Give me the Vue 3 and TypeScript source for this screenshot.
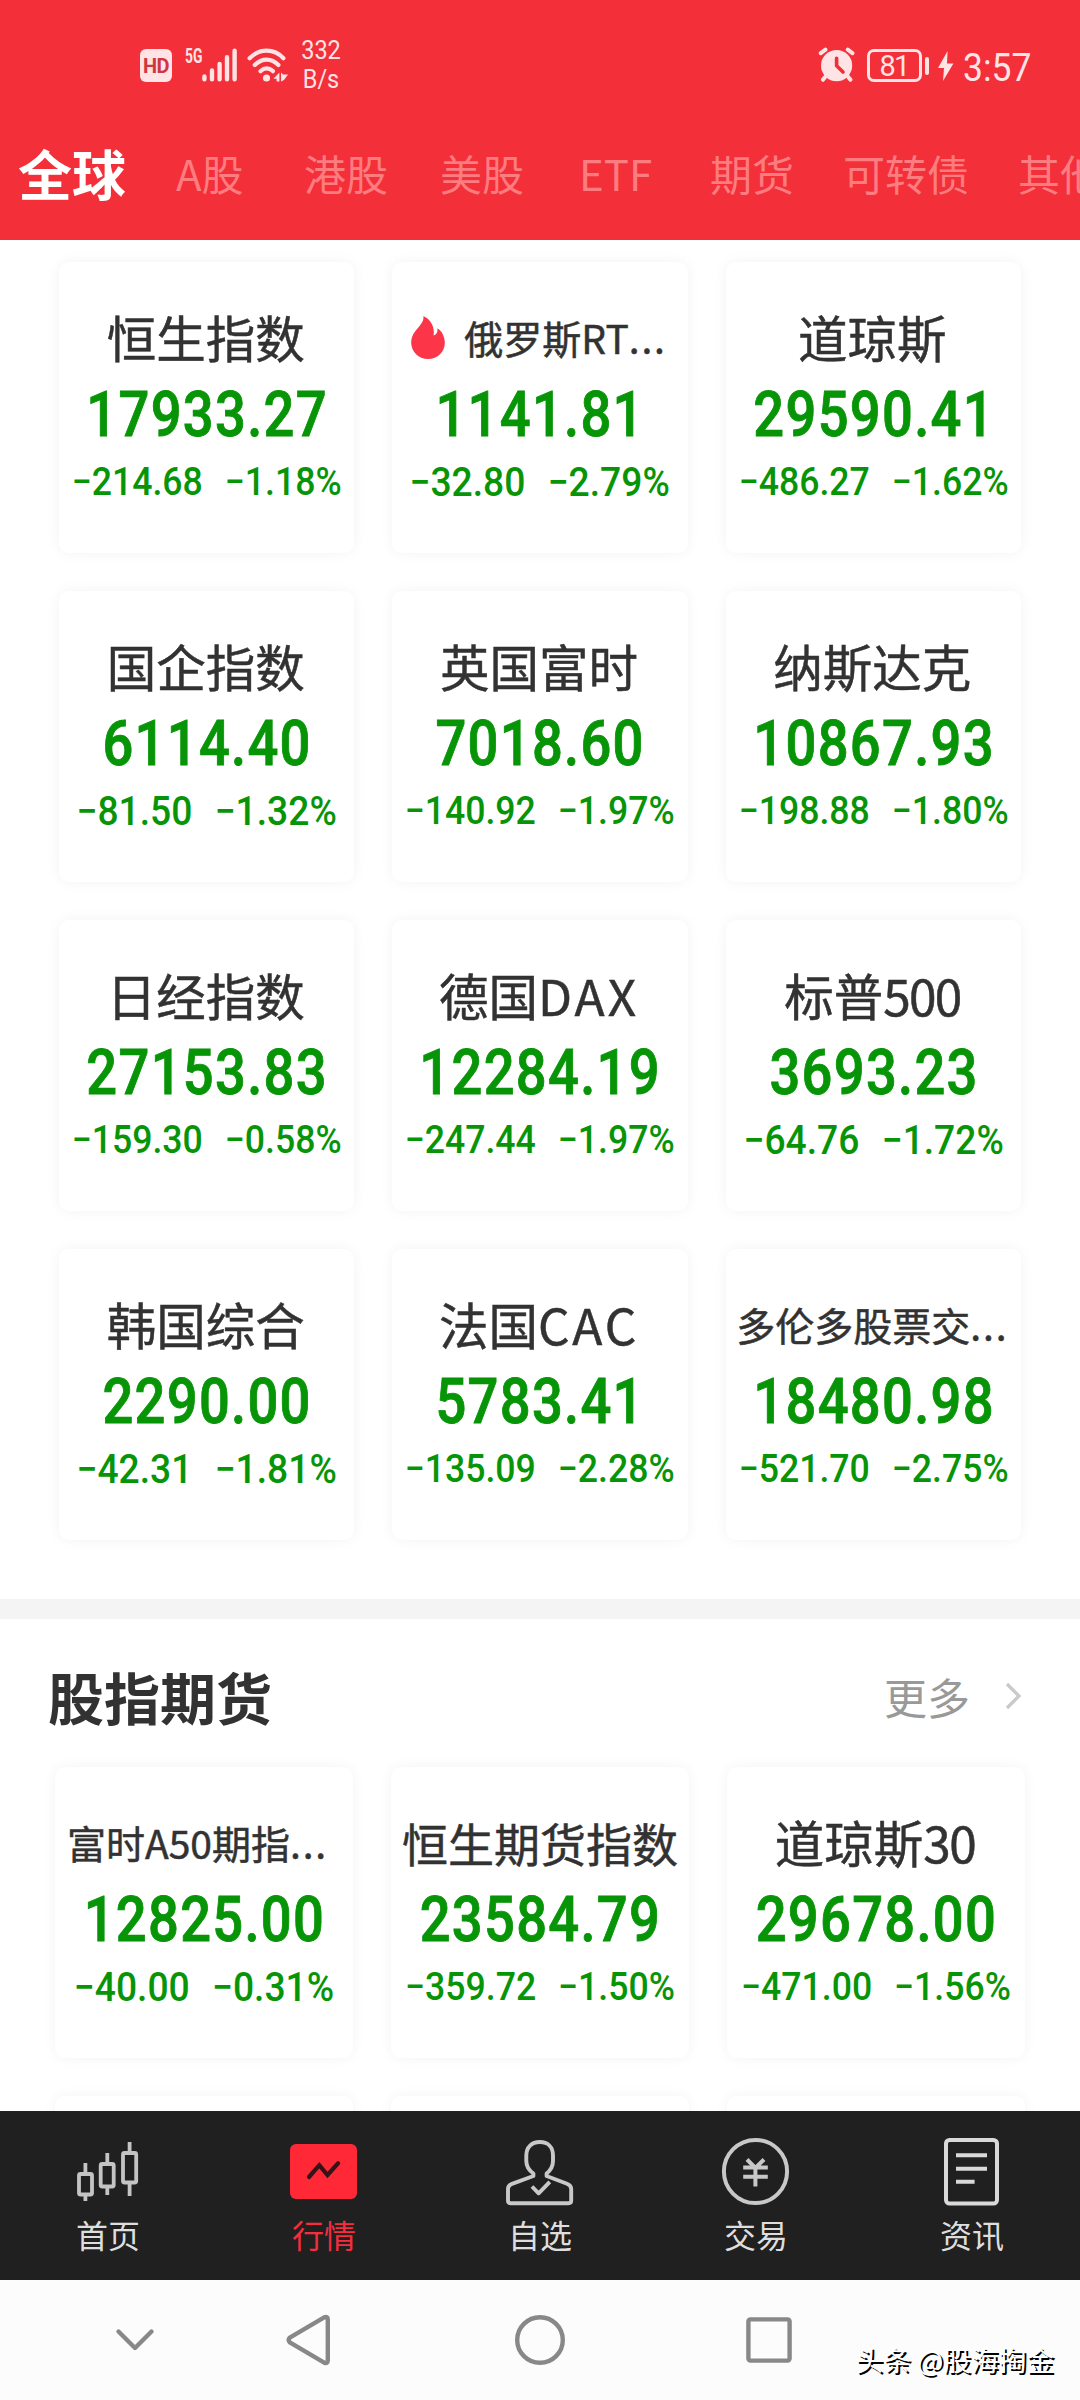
<script setup lang="ts">
interface Quote {
  name: string
  price: string
  change: string
  percent: string
  tail?: string
  tracking?: number
  size?: 'mid' | 'small'
  cut?: boolean
  hot?: boolean
}

interface Tab {
  label: string
  width: number
}

const tabs: Tab[] = [
  { label: 'A股', width: 128 },
  { label: '港股', width: 136 },
  { label: '美股', width: 139 },
  { label: 'ETF', width: 131 },
  { label: '期货', width: 133 },
  { label: '可转债', width: 175 },
  { label: '其他', width: 100 },
]

const indices: Quote[] = [
  { name: '恒生指数', price: '17933.27', change: '−214.68', percent: '−1.18%' },
  { name: '俄罗斯RT', price: '1141.81', change: '−32.80', percent: '−2.79%', size: 'small', cut: true, hot: true },
  { name: '道琼斯', price: '29590.41', change: '−486.27', percent: '−1.62%' },
  { name: '国企指数', price: '6114.40', change: '−81.50', percent: '−1.32%' },
  { name: '英国富时', price: '7018.60', change: '−140.92', percent: '−1.97%' },
  { name: '纳斯达克', price: '10867.93', change: '−198.88', percent: '−1.80%' },
  { name: '日经指数', price: '27153.83', change: '−159.30', percent: '−0.58%' },
  { name: '德国', tail: 'DAX', tracking: 3, price: '12284.19', change: '−247.44', percent: '−1.97%' },
  { name: '标普', tail: '500', tracking: -1.8, price: '3693.23', change: '−64.76', percent: '−1.72%' },
  { name: '韩国综合', price: '2290.00', change: '−42.31', percent: '−1.81%' },
  { name: '法国', tail: 'CAC', tracking: 2.8, price: '5783.41', change: '−135.09', percent: '−2.28%' },
  { name: '多伦多股票交', price: '18480.98', change: '−521.70', percent: '−2.75%', size: 'small', cut: true },
]

const futures: Quote[] = [
  { name: '富时A50期指', price: '12825.00', change: '−40.00', percent: '−0.31%', size: 'small', cut: true },
  { name: '恒生期货指数', price: '23584.79', change: '−359.72', percent: '−1.50%', size: 'mid' },
  { name: '道琼斯', tail: '30', tracking: -1.5, price: '29678.00', change: '−471.00', percent: '−1.56%' },
]

const sections = [
  { key: 'indices', quotes: indices },
  { key: 'futures', quotes: futures },
]
</script>

<template>
  <div class="screen">
    <header class="top">
      <div class="status">
        <span class="hd">HD</span>
        <span class="five-g">5G</span>
        <svg class="signal" width="36" height="34" viewBox="0 0 36 34">
          <g stroke="#ffe3e5" stroke-width="4.4" stroke-linecap="round">
            <path d="M2.4 28.5V31.2M10 22.5V31.2M17.6 16V31.2M25 9.2V31.2M32.6 2.8V31.2" />
          </g>
        </svg>
        <svg class="wifi" width="42" height="34" viewBox="0 0 42 34">
          <g fill="none" stroke="#ffe3e5" stroke-width="4.2" stroke-linecap="round">
            <path d="M2.6 10.2C12.5 .2 27 .2 36.4 10.2" />
            <path d="M7.8 17C15 9.8 24.5 9.8 31.4 17" />
            <path d="M13.4 23.2C17.5 19.5 21.8 19.5 26 23.2" />
          </g>
          <circle cx="19.5" cy="30" r="3.6" fill="#ffe3e5" />
          <path d="M32.4 24.5V33.4H29.6V30.8H26.4ZM34 24.5L36 26.6H41L37 32L34 33.4Z" fill="#ffe3e5" />
        </svg>
        <div class="speed"><span>332</span><span>B/s</span></div>
        <svg class="alarm" width="38" height="36" viewBox="0 0 38 36">
          <circle cx="18.6" cy="18.6" r="15.6" fill="#ffe3e5" />
          <path d="M2.8 6.2L7.4 2.6M34.4 6.2L29.8 2.6M8 29L5 32.6M29.4 29L32.4 32.6" stroke="#ffe3e5" stroke-width="4" stroke-linecap="round" />
          <path d="M18.6 11.4V18.8L25 25" fill="none" stroke="#f02f38" stroke-width="3.6" stroke-linecap="round" stroke-linejoin="round" />
        </svg>
        <span class="battery">81</span>
        <span class="nub"></span>
        <svg class="bolt" width="16" height="30" viewBox="0 0 16 30">
          <path d="M9.6 0L0 17H6L5 30L15.4 12.4H9Z" fill="#ffe3e5" />
        </svg>
        <span class="clock">3:57</span>
      </div>
      <nav class="tabs">
        <span class="tab active">全球</span>
        <span v-for="tab in tabs" :key="tab.label" class="tab" :style="{ width: tab.width + 'px' }">{{ tab.label }}</span>
      </nav>
    </header>

    <main class="content">
      <section v-for="section in sections" :key="section.key" :class="section.key">
        <div v-if="section.key === 'futures'" class="heading">
          <h2>股指期货</h2>
          <span class="more">更多</span>
          <svg width="20" height="32" viewBox="0 0 20 32">
            <path d="M4 4L16 16L4 28" fill="none" stroke="#c9c9c9" stroke-width="3.2" />
          </svg>
        </div>
        <div class="grid">
          <article v-for="quote in section.quotes" :key="quote.name" class="card">
            <div class="name" :class="[quote.size, { cut: quote.cut }]">
              <svg v-if="quote.hot" class="fire" width="34" height="43" viewBox="0 0 34 43">
                <path d="M12.3 0C14 8 3.5 12.5 .9 21.5C-2.4 33 6 43 17 43C27 43 34.2 35 33.8 26C33.5 20 30.5 14.8 26.3 12.3C27 16 25.4 18.6 22.6 19.4C24 10 19 3 12.3 0Z" fill="#fd3549" />
              </svg>
              <span>{{ quote.name }}<span v-if="quote.tail" :style="{ letterSpacing: quote.tracking + 'px' }">{{ quote.tail }}</span><span v-if="quote.cut" class="dots">...</span></span>
            </div>
            <div class="price"><span>{{ quote.price }}</span></div>
            <div class="delta" :class="{ roomy: quote.change.length < 7 }">
              <span>{{ quote.change }}</span><span>{{ quote.percent }}</span>
            </div>
          </article>
          <template v-if="section.key === 'futures'">
            <article v-for="n in 3" :key="n" class="card"></article>
          </template>
        </div>
      </section>
    </main>

    <nav class="dock">
      <div class="item">
        <svg width="80" height="80" viewBox="0 0 80 80" fill="none" stroke="#c4c4c4" stroke-width="3.8">
          <rect x="11" y="43" width="13" height="20.5" rx="1.5" />
          <rect x="32.7" y="33" width="13" height="22.5" rx="1.5" />
          <rect x="55" y="22" width="13.2" height="29.5" rx="1.5" />
          <path d="M17.4 32V43M17.4 64V70M39.3 22V32M39.3 56V64M61.6 11V21M61.6 52V65" />
        </svg>
        <span>首页</span>
      </div>
      <div class="item current">
        <svg width="80" height="80" viewBox="0 0 80 80" fill="none">
          <rect x="6" y="13" width="67" height="55" rx="6" fill="#ff2837" />
          <path d="M25 46L35.3 34.2L43.5 44L54.2 32.2" stroke="#351318" stroke-width="4.2" stroke-linecap="round" />
        </svg>
        <span>行情</span>
      </div>
      <div class="item">
        <svg width="80" height="80" viewBox="0 0 80 80" fill="none" stroke="#c8c8c8" stroke-width="3.9" stroke-linejoin="round">
          <path d="M33.4 42.5C28.5 39 26.3 35 26.3 30V24.5C26.3 16 31.8 11 39.8 11S53 16 53 24.5V30C53 35 51 39 46.6 42.5V45L67 52.8Q71.2 54.5 71.2 58V69.5Q71.2 72.2 68.5 72.2H10.7Q8 72.2 8 69.5V58Q8 54.5 12 52.8L33.4 45Z" />
          <path d="M32 55.5L38.6 62.3L49.8 50.8" />
        </svg>
        <span>自选</span>
      </div>
      <div class="item">
        <svg width="80" height="80" viewBox="0 0 80 80" fill="none" stroke="#c8c8c8" stroke-width="4">
          <circle cx="39.5" cy="40.5" r="31.6" />
          <path d="M31 28.5L39.4 37L48 28.5M39.4 36V55.5M27.2 36.6H51.8M27.2 45.7H51.8" />
        </svg>
        <span>交易</span>
      </div>
      <div class="item">
        <svg width="80" height="80" viewBox="0 0 80 80" fill="none" stroke="#d9d9d9" stroke-width="4">
          <rect x="14" y="9" width="51" height="63.5" rx="3.5" />
          <path d="M24 24.3H55M24 37.7H55M24 50.7H42.6" />
        </svg>
        <span>资讯</span>
      </div>
    </nav>

    <footer class="system">
      <svg class="hide" width="60" height="60" viewBox="0 0 60 60"><path d="M13.5 21.5L30 38L46.5 21.5" /></svg>
      <svg class="back" width="60" height="60" viewBox="0 0 60 60"><path d="M10.8 27.6L45.2 7.4Q48.8 6 48.8 9.4V50.6Q48.8 54 45.2 52.6L10.8 32.4Q8.6 30 10.8 27.6Z" /></svg>
      <svg class="home" width="60" height="60" viewBox="0 0 60 60"><circle cx="30" cy="30" r="22.8" /></svg>
      <svg class="recent" width="60" height="60" viewBox="0 0 60 60"><rect x="9.4" y="9.4" width="41.2" height="41.2" rx="2" /></svg>
      <span class="credit">头条 @股海掏金</span>
    </footer>
  </div>
</template>

<style>
body {
  background: #fff;
}
</style>

<style scoped>
.screen {
  display: flex;
  flex-direction: column;
  width: 1080px;
  height: 2400px;
  overflow: hidden;
  background: #fff;
  font-family: "Noto Sans CJK SC", sans-serif;
  color: #323232;
}

.top {
  flex: none;
  height: 240px;
  background: #f32f39;
  color: #ffe3e5;
}

.status {
  display: flex;
  align-items: flex-start;
  height: 132px;
  padding: 0 49px 0 140px;
  box-sizing: border-box;
  font-family: Roboto, sans-serif;
}

.hd {
  width: 32px;
  height: 33px;
  margin-top: 49px;
  border-radius: 6px;
  background: #ffe3e5;
  color: #cf3640;
  font-size: 20px;
  font-weight: 700;
  line-height: 34px;
  text-align: center;
  letter-spacing: -.5px;
}

.five-g {
  width: 17px;
  margin: 45px 0 0 13px;
  font-size: 21px;
  font-weight: 700;
  line-height: 22px;
  transform: scaleX(.66);
  transform-origin: left;
}

.signal {
  margin-top: 48px;
}

.wifi {
  margin: 48px 0 0 9px;
}

.speed {
  display: flex;
  flex-direction: column;
  width: 44px;
  margin: 37px 0 0 10px;
  font-size: 25px;
  line-height: 28.5px;
  align-items: center;
  transform: scaleX(.94);
}

.alarm {
  margin: 47px 0 0 auto;
}

.battery {
  width: 55px;
  height: 33px;
  margin: 49px 0 0 11px;
  border: 3px solid #ffe3e5;
  border-radius: 7px;
  box-sizing: border-box;
  font-size: 29px;
  line-height: 28px;
  text-align: center;
  letter-spacing: -1.8px;
}

.nub {
  width: 4.5px;
  height: 18px;
  margin: 57px 0 0 3px;
  border-radius: 2px;
  background: #ffe3e5;
}

.bolt {
  margin: 51px 0 0 9px;
}

.clock {
  width: 68px;
  margin: 46px 0 0 9px;
  font-size: 38.5px;
  line-height: 44px;
  white-space: nowrap;
  transform: scaleX(.92);
  transform-origin: left;
}

.tabs {
  display: flex;
  height: 82px;
  padding-left: 18px;
  align-items: center;
  overflow: hidden;
  white-space: nowrap;
}

.tab {
  flex: none;
  color: #fd7c80;
  font-size: 42px;
  line-height: 60px;
}

.active {
  width: 158px;
  color: #fff;
  font-size: 54px;
  font-weight: 700;
}

.content {
  flex: none;
  height: 1871px;
  overflow: hidden;
}

.indices {
  padding: 22px 59px 59px;
}

.futures {
  border-top: 20px solid #f4f4f4;
  padding: 0 55px;
}

.heading {
  display: flex;
  align-items: center;
  height: 148px;
  margin: 0 0 0 -7px;
}

.heading h2 {
  flex: 1;
  margin: 5px 0 0;
  font-size: 56px;
  font-weight: 700;
  line-height: 70px;
}

.more {
  margin-top: 6px;
  color: #999;
  font-size: 43px;
  line-height: 60px;
}

.heading svg {
  margin: 5px 2px 0 33px;
}

.grid {
  display: grid;
  grid-template-columns: repeat(3, 1fr);
  grid-auto-rows: 291px;
  gap: 38px;
}

.card {
  display: flex;
  flex-direction: column;
  min-width: 0;
  padding-top: 43px;
  border-radius: 10px;
  box-sizing: border-box;
  background: #fff;
  box-shadow: 0 0 14px rgba(0, 0, 0, .05);
}

.name {
  display: flex;
  justify-content: center;
  align-items: center;
  height: 64px;
  padding-right: 2px;
  font-size: 49.5px;
  line-height: 64px;
  white-space: nowrap;
  -webkit-text-stroke: .5px #323232;
}

.mid {
  padding-right: 0;
  font-size: 46px;
}

.small {
  font-size: 39px;
}

.dots {
  letter-spacing: 1.8px;
}

.fire {
  margin: 0 19px 0 0;
}

.futures .cut {
  justify-content: flex-start;
  padding-left: 12px;
}

.price,
.delta {
  display: flex;
  justify-content: center;
  color: #079507;
  font-family: Roboto, sans-serif;
  white-space: nowrap;
}

.price {
  margin-top: 8px;
  padding-left: 1px;
  font-size: 63px;
  font-weight: 500;
  line-height: 76px;
  letter-spacing: 1.5px;
  transform: scaleX(.862);
  -webkit-text-stroke: .9px #079507;
}

.delta {
  gap: 24px;
  margin-top: 1px;
  font-size: 39px;
  font-weight: 500;
  line-height: 57px;
  transform: scaleX(.913);
}

.roomy {
  font-size: 40px;
  transform: scaleX(.93);
}

.dock {
  display: grid;
  grid-template-columns: repeat(5, 1fr);
  flex: none;
  height: 169px;
  background: #202020;
}

.item {
  display: flex;
  flex-direction: column;
  align-items: center;
  padding-top: 20px;
  color: #dedede;
  font-size: 32px;
  line-height: 46px;
}

.current {
  color: #f52d3d;
}

.system {
  position: relative;
  display: flex;
  flex: 1;
  align-items: center;
  background: #fcfcfc;
}

.system svg {
  fill: none;
  stroke: #888;
  stroke-width: 4.4;
  stroke-linecap: round;
  stroke-linejoin: round;
}

.hide {
  margin-left: 105px;
}

.back {
  margin-left: 114px;
}

.home {
  margin-left: 171px;
}

.recent {
  margin-left: 169px;
}

.credit {
  position: absolute;
  right: 26px;
  bottom: 21px;
  color: #fff;
  font-size: 27.7px;
  line-height: 40px;
  text-shadow: 2px 2px 0 #000;
  white-space: nowrap;
}
</style>
